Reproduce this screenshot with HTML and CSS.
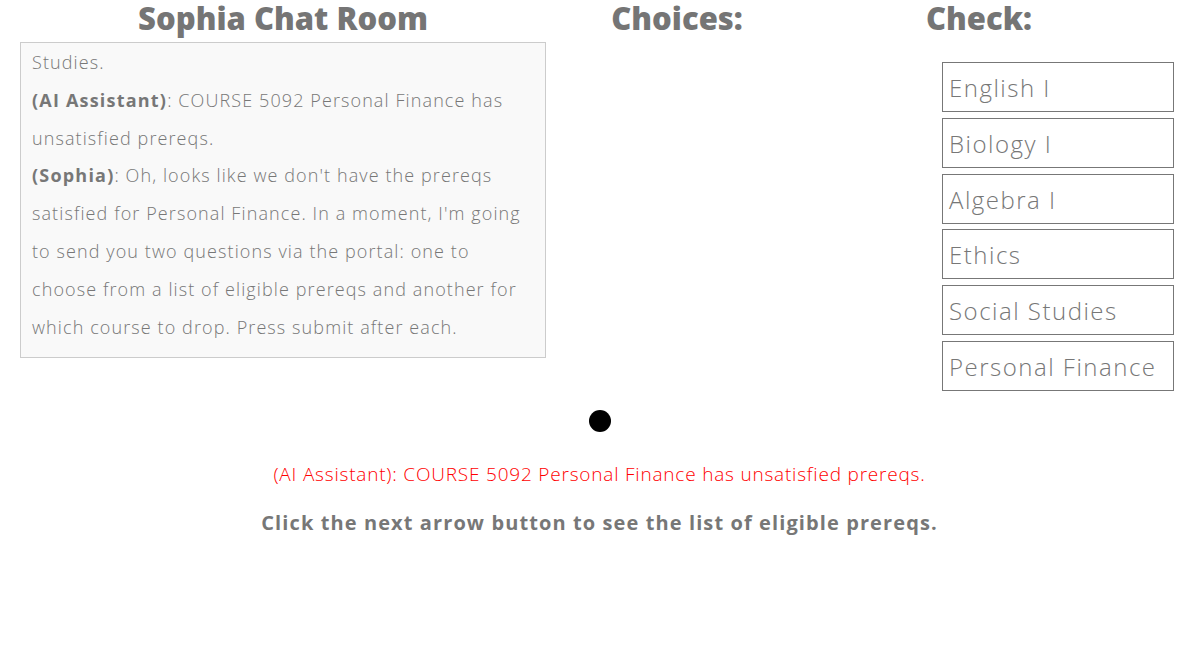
FILE: index.html
```html
<!DOCTYPE html>
<html>
<head>
<meta charset="utf-8">
<link rel="stylesheet" href="styles.css">
</head>
<body>
<div class="row">
  <section class="col col-chat">
    <h2 class="title">Sophia Chat Room</h2>
    <div class="chat">
      <p class="msg">Studies.</p>
      <p class="msg"><b>(AI Assistant)</b>: COURSE 5092 Personal Finance has unsatisfied prereqs.</p>
      <p class="msg"><b>(Sophia)</b>: Oh, looks like we don't have the prereqs satisfied for Personal Finance. In a moment, I'm going to send you two questions via the portal: one to choose from a list of eligible prereqs and another for which course to drop. Press submit after each.</p>
    </div>
  </section>
  <section class="col col-choices">
    <h2 class="title">Choices:</h2>
  </section>
  <section class="col col-check">
    <h2 class="title">Check:</h2>
    <ul class="check-list">
      <li class="check-item">English I</li>
      <li class="check-item">Biology I</li>
      <li class="check-item">Algebra I</li>
      <li class="check-item">Ethics</li>
      <li class="check-item">Social Studies</li>
      <li class="check-item">Personal Finance</li>
    </ul>
  </section>
</div>
<div class="status">
  <div class="dot"></div>
  <p class="alert">(AI Assistant): COURSE 5092 Personal Finance has unsatisfied prereqs.</p>
  <p class="hint">Click the next arrow button to see the list of eligible prereqs.</p>
</div>
</body>
</html>
```
FILE: styles.css
```css
html, body {
  margin: 0;
  padding: 0;
  background: #fff;
}
body {
  font-family: "Open Sans", "DejaVu Sans", sans-serif;
  color: #777;
}
.row {
  display: flex;
  align-items: flex-start;
}
.col-chat {
  width: 566px;
}
.col-choices {
  width: 222px;
}
.col-check {
  width: 382px;
}
.title {
  margin: 0;
  font-size: 31px;
  line-height: 37px;
  font-weight: 800;
  text-align: center;
  color: #757575;
}
.chat {
  margin: 5px 0 0 20px;
  width: 526px;
  height: 316px;
  box-sizing: border-box;
  border: 1px solid #ccc;
  background: #f9f9f9;
  padding: 0 11px 10px 11px;
  display: flex;
  flex-direction: column;
  justify-content: flex-end;
  overflow: hidden;
  font-size: 18px;
  font-weight: 300;
  line-height: 37.9px;
  letter-spacing: 1.1px;
}
.msg {
  margin: 0;
}
.msg b {
  font-weight: 700;
  letter-spacing: 1.2px;
}
.check-list {
  list-style: none;
  margin: 25px 0 0 154px;
  padding: 0;
  width: 232px;
  display: flex;
  flex-direction: column;
  gap: 5.8px;
}
.check-item {
  height: 50px;
  box-sizing: border-box;
  border: 1px solid #777;
  padding-left: 6px;
  font-size: 24px;
  font-weight: 300;
  line-height: 50px;
  letter-spacing: 1.5px;
  color: #777;
}
.status {
  padding-left: 16px;
  display: flex;
  flex-direction: column;
  align-items: center;
}
.dot {
  margin-top: 19px;
  width: 22px;
  height: 22px;
  border-radius: 50%;
  background: #000;
}
.alert {
  margin: 28px 0 0 0;
  font-size: 19px;
  line-height: 28px;
  font-weight: 300;
  letter-spacing: 0.8px;
  color: #f00;
}
.hint {
  margin: 21px 0 0 0;
  font-size: 20px;
  line-height: 28px;
  font-weight: 700;
  letter-spacing: 1.1px;
  color: #777;
}
```
